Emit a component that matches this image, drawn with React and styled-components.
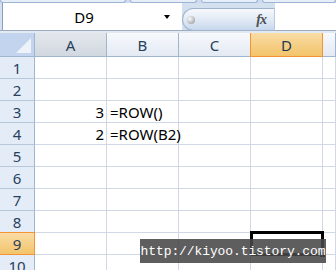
import styled, { createGlobalStyle } from "styled-components";

const Global = createGlobalStyle`
    html, body{
        margin: 0;
        padding: 0;
        background: #fff;
        overflow: hidden;
    }
`;

const Screen = styled.div`
    position: relative;
    width: 336px;
    height: 270px;
    overflow: hidden;
    font-family: "Noto Sans", "Noto Sans CJK KR", sans-serif;
    background: #fff;
`;

const Ribbon = styled.div`
    display: flex;
    gap: 4px;
    height: 3px;
    background: #cddbee;
`;
const RibbonGroup = styled.div`
    width: ${p => p.$w}px;
    height: 2px;
    background: #e6eef8;
    border: 1px solid #9db5d4;
    border-top: none;
    border-radius: 0 0 3px 3px;
`;

const FormulaBar = styled.div`
    display: flex;
    height: 27px;
    padding-left: 2px;
    background: #d3e0f0;
    border-bottom: 1px solid #9aabc2;
`;
const NameBox = styled.div`
    display: flex;
    align-items: center;
    width: 176px;
    background: #fff;
    border-left: 1px solid #8b9fba;
`;
const NameText = styled.div`
    flex: 1;
    text-align: center;
    font-size: 15px;
    color: #000;
    padding-left: 1px;
`;
const DropArrow = styled.div`
    width: 0;
    height: 0;
    margin-right: 9px;
    border-left: 3.5px solid transparent;
    border-right: 3.5px solid transparent;
    border-top: 4px solid #000;
`;
const Spacer = styled.div`
    width: 3px;
    background: #fff;
`;
const Pill = styled.div`
    position: relative;
    display: flex;
    align-items: center;
    justify-content: space-between;
    align-self: flex-end;
    box-sizing: border-box;
    width: 93px;
    height: 23px;
    margin-bottom: -1px;
    padding: 0 8px 0 4px;
    border: 1px solid #9fb3cf;
    border-right-color: #b8c8dd;
    border-radius: 12px 0 0 12px;
    background: linear-gradient(#f7f9fc, #dfe8f4 55%, #c8d8ed);
`;
const Knob = styled.div`
    width: 8px;
    height: 8px;
    border-radius: 50%;
    background: radial-gradient(circle at 35% 35%, #fafafa, #b9bbbe 60%, #8e9297);
`;
const Fx = styled.span`
    font-family: "Liberation Serif", serif;
    font-style: italic;
    font-weight: bold;
    font-size: 14px;
    color: #4b4f55;
    letter-spacing: -1px;
`;
const FormulaInput = styled.div`
    flex: 1;
    background: #fff;
`;

const Band = styled.div`
    height: 2px;
    background: #e3e9f1;
`;

const Sheet = styled.div`
    display: grid;
    grid-template-columns: 35px 72px 72px 72px 72px 1fr;
    grid-template-rows: 24px;
    grid-auto-rows: 22px;
`;
const Corner = styled.div`
    box-sizing: border-box;
    position: relative;
    background: #c3d5ee;
    border-right: 1px solid #9eb6ce;
    border-bottom: 1px solid #9eb6ce;
    svg{
        position: absolute;
        right: 3px;
        bottom: 3px;
    }
`;
const headTones = {
    normal: { bg: "linear-gradient(#f7f9fc, #e4eaf3)", line: "#9eb6ce", text: "#27415c" },
    hover: { bg: "linear-gradient(#e3e7ec, #d2d8e0)", line: "#9eb6ce", text: "#27415c" },
    active: { bg: "linear-gradient(#f9dca6, #f3c46a)", line: "#f29436", text: "#1f3a55" },
};
const ColHead = styled.div`
    box-sizing: border-box;
    display: flex;
    align-items: center;
    justify-content: center;
    font-size: 15px;
    color: ${p => headTones[p.$tone].text};
    background: ${p => headTones[p.$tone].bg};
    border-right: 1px solid ${p => headTones[p.$tone].line};
    border-bottom: 1px solid ${p => headTones[p.$tone].line};
    ${p => p.$tone === "active" && "border-left: 1px solid #f29436; margin-left: -1px;"}
`;
const RowHead = styled.div`
    box-sizing: border-box;
    display: flex;
    align-items: center;
    justify-content: center;
    font-size: 15px;
    color: #27415c;
    background: ${p => p.$active ? "linear-gradient(#f9dca6, #f3c46a)" : "#e4ecf7"};
    border-right: 1px solid ${p => p.$active ? "#f29436" : "#9eb6ce"};
    border-bottom: 1px solid ${p => p.$active ? "#f29436" : "#b7c8dd"};
    ${p => p.$active && "border-top: 1px solid #f29436; margin-top: -1px;"}
`;
const Cell = styled.div`
    box-sizing: border-box;
    position: relative;
    display: flex;
    align-items: center;
    justify-content: ${p => p.$num ? "flex-end" : "flex-start"};
    padding: 1px ${p => p.$num ? "2px" : "0"} 0 ${p => p.$num ? "0" : "3px"};
    font-size: 15px;
    color: #000;
    white-space: nowrap;
    border-right: 1px solid #d0d7e5;
    border-bottom: 1px solid #d0d7e5;
    ${p => p.$selected && `
        &::after{
            content: "";
            position: absolute;
            top: -2px;
            left: -1px;
            right: -2px;
            bottom: -2px;
            border: 3px solid #000;
        }
        &::before{
            content: "";
            position: absolute;
            right: -4px;
            bottom: -4px;
            width: 5px;
            height: 5px;
            background: #000;
            border: 1px solid #fff;
            z-index: 1;
        }
    `}
`;

const Watermark = styled.div`
    position: absolute;
    left: 140px;
    top: 239px;
    width: 186px;
    height: 24px;
    display: flex;
    align-items: center;
    justify-content: center;
    background: rgba(72, 72, 72, 0.88);
    color: #fff;
    font-family: "Liberation Mono", monospace;
    font-size: 13px;
    letter-spacing: -0.1px;
    z-index: 2;
`;

const data = {
    3: ["3", "=ROW()"],
    4: ["2", "=ROW(B2)"],
};

export default function App(){
    const cols = [
        { label: "A", tone: "hover" },
        { label: "B", tone: "normal" },
        { label: "C", tone: "normal" },
        { label: "D", tone: "active" },
        { label: "", tone: "normal" },
    ];
    const rows = [1, 2, 3, 4, 5, 6, 7, 8, 9, 10];
    return(
        <Screen>
            <Global />
            <Ribbon>
                <RibbonGroup $w={127} />
                <RibbonGroup $w={66} />
                <RibbonGroup $w={56} />
                <RibbonGroup $w={74} />
            </Ribbon>
            <FormulaBar>
                <NameBox>
                    <NameText>D9</NameText>
                    <DropArrow />
                </NameBox>
                <Spacer />
                <Pill>
                    <Knob />
                    <Fx>fx</Fx>
                </Pill>
                <FormulaInput />
            </FormulaBar>
            <Band />
            <Sheet>
                <Corner>
                    <svg width="15" height="15" viewBox="0 0 15 15">
                        <polygon points="15,0 15,15 0,15" fill="#eef3fa" />
                    </svg>
                </Corner>
                {cols.map((c, i) => <ColHead key={i} $tone={c.tone}>{c.label}</ColHead>)}
                {rows.map(r => [
                    <RowHead key={"h" + r} $active={r === 9}>{r}</RowHead>,
                    <Cell key={"a" + r} $num>{data[r] ? data[r][0] : ""}</Cell>,
                    <Cell key={"b" + r}>{data[r] ? data[r][1] : ""}</Cell>,
                    <Cell key={"c" + r} />,
                    <Cell key={"d" + r} $selected={r === 9} />,
                    <Cell key={"e" + r} />,
                ])}
            </Sheet>
            <Watermark>http://kiyoo.tistory.com</Watermark>
        </Screen>
    )
}
